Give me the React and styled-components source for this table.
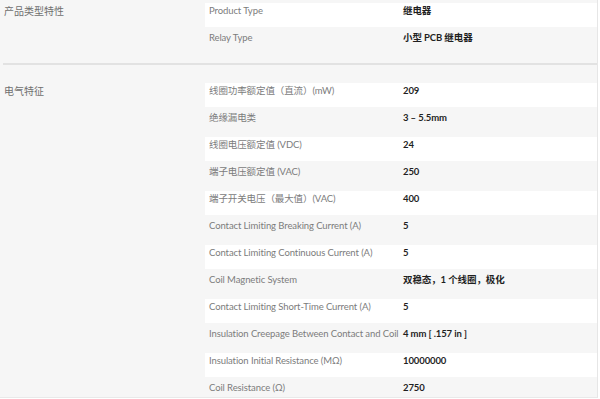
import React from "react";
import styled, { createGlobalStyle } from "styled-components";

const Global = createGlobalStyle`
  html, body { margin: 0; padding: 0; background: #ffffff; }
  body { font-family: Lato, "Noto Sans CJK SC", sans-serif; }
`;

const Page = styled.div`
  width: 594px;
  height: 397px;
  overflow: hidden;
  padding-left: 3px;
  background: #f6f6f6;
  border-right: 1px solid #e6e6e6;
  border-bottom: 1px solid #e9e9e9;
  font-family: Lato, "Noto Sans CJK SC", sans-serif;
  font-size: 10px;
`;

const Section = styled.section`
  display: grid;
  grid-template-columns: 202px 1fr;
  padding: ${(p) => (p.$first ? "0 0 6px" : "15px 0 6px")};
  border-bottom: ${(p) => (p.$first ? "2px solid #e2e2e2" : "none")};
`;

const SectionTitle = styled.div`
  padding: 4px 0 0 1px;
  line-height: 14px;
  color: #6f6f6f;
  font-size: 10px;
`;

const Table = styled.table`
  width: 100%;
  border-collapse: separate;
  border-spacing: 0 3px;
  table-layout: fixed;
`;

const Row = styled.tr`
  background: ${(p) => (p.$odd ? "#ffffff" : "transparent")};
`;

const Label = styled.td`
  width: 196px;
  height: 24px;
  box-sizing: border-box;
  padding: 1px 0 0 4px;
  vertical-align: top;
  line-height: 14px;
  color: #7c7c7c;
  font-size: 9.5px;
  letter-spacing: -0.1px;
  white-space: nowrap;
`;

const Value = styled.td`
  height: 24px;
  box-sizing: border-box;
  padding: 1px 0 0 2px;
  vertical-align: top;
  line-height: 14px;
  color: #1f1f1f;
  font-weight: 700;
  font-size: 9.5px;
  letter-spacing: -0.1px;
  white-space: nowrap;
`;

const sections = [
  {
    title: "产品类型特性",
    rows: [
      ["Product Type", "继电器"],
      ["Relay Type", "小型 PCB 继电器"],
    ],
  },
  {
    title: "电气特征",
    rows: [
      ["线圈功率额定值（直流）(mW)", "209"],
      ["绝缘漏电类", "3 – 5.5mm"],
      ["线圈电压额定值 (VDC)", "24"],
      ["端子电压额定值 (VAC)", "250"],
      ["端子开关电压（最大值）(VAC)", "400"],
      ["Contact Limiting Breaking Current (A)", "5"],
      ["Contact Limiting Continuous Current (A)", "5"],
      ["Coil Magnetic System", "双稳态，1 个线圈，极化"],
      ["Contact Limiting Short-Time Current (A)", "5"],
      ["Insulation Creepage Between Contact and Coil", "4 mm [ .157 in ]"],
      ["Insulation Initial Resistance (MΩ)", "10000000"],
      ["Coil Resistance (Ω)", "2750"],
    ],
  },
];

export default function App() {
  return (
    <>
      <Global />
      <Page>
        {sections.map((s, si) => (
          <Section key={s.title} $first={si === 0}>
            <SectionTitle>{s.title}</SectionTitle>
            <Table>
              <tbody>
                {s.rows.map(([l, v], i) => (
                  <Row key={l} $odd={i % 2 === 0}>
                    <Label>{l}</Label>
                    <Value>{v}</Value>
                  </Row>
                ))}
              </tbody>
            </Table>
          </Section>
        ))}
      </Page>
    </>
  );
}
